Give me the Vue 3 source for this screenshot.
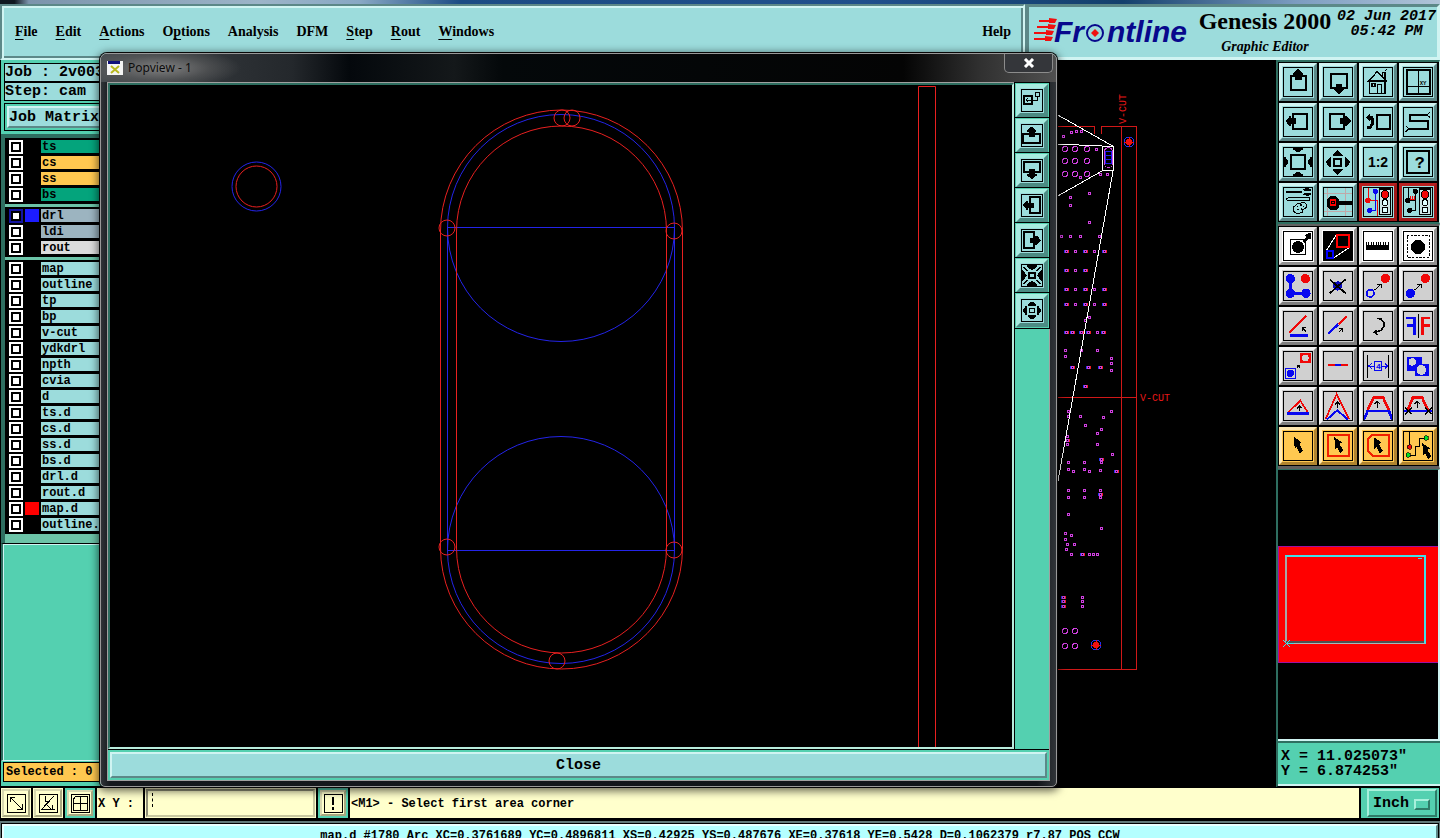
<script setup>
import { ref } from 'vue'

const menus = [
  ['', 'F', 'ile'], ['', 'E', 'dit'], ['', 'A', 'ctions'], ['O', 'p', 'tions'],
  ['Analysis', '', ''], ['DFM', '', ''], ['', 'S', 'tep'], ['', 'R', 'out'], ['', 'W', 'indows']
]

const layerGroups = [
  [
    { name: 'ts', tone: 'mask' }, { name: 'cs', tone: 'signal' },
    { name: 'ss', tone: 'signal' }, { name: 'bs', tone: 'mask' }
  ],
  [
    { name: 'drl', tone: 'drill', swatch: 'blue', active: true },
    { name: 'ldi', tone: 'drill' }, { name: 'rout', tone: 'rout' }
  ],
  ['map', 'outline', 'tp', 'bp', 'v-cut', 'ydkdrl', 'npth', 'cvia', 'd', 'ts.d', 'cs.d', 'ss.d',
    'bs.d', 'drl.d', 'rout.d', 'map.d', 'outline.d'
  ].map(name => ({ name, tone: 'misc', swatch: name === 'map.d' ? 'red' : '' }))
]

const R = '#f00808'
const B = '#0808f0'
const cursor = (x, y) =>
  `<path transform="translate(${x} ${y})" d="M0 0l23 16-7 5 11 20-9 9-10-20-6 6z"/>`
const tiny = (x1, y1, x2, y2, head) =>
  `<path d="M${x1} ${y1}L${x2} ${y2}M${head}" fill="none" stroke="#000" stroke-width="3"/>`
const light = `<path d="M50 6h33v76h-33z" fill="#cfe8e8" stroke="#000" stroke-width="4"/><circle cx="66" cy="23" r="12" fill="${R}" stroke="#000" stroke-width="3"/><circle cx="66" cy="47" r="9" fill="#dff" stroke="#000" stroke-width="3"/><circle cx="66" cy="69" r="9" fill="#dff" stroke="#000" stroke-width="3"/>`

const viewTools = [
  { label: 'Pan up', art: '<path d="M24 27h46v42H24z" fill="none" stroke="#000" stroke-width="6"/><path d="M46 5l15 14v5h-5v16H36V24h-5v-5z"/>' },
  { label: 'Pan down', art: '<path d="M25 20h46v43H25z" fill="none" stroke="#000" stroke-width="6"/><path d="M48 82L34 70v-5h4V52h20v13h4v5z"/>' },
  { label: 'Home view', art: '<path d="M20 42h46v37H20zM14 46L43 13l30 33M58 30V17h8v22M66 12l5-5M27 50h9v9h-9zM43 79V52h13v27" fill="none" stroke="#000" stroke-width="4"/>' },
  { label: 'Zoom to XY', art: '<path d="M11 10h69v71H11z" fill="none" stroke="#000" stroke-width="6"/><path d="M46 10v71M11 57h69" fill="none" stroke="#000" stroke-width="3"/><text x="50" y="53" font-size="17" font-weight="700">XY</text>' },
  { label: 'Pan left', art: '<path d="M29 20h44v46H29z" fill="none" stroke="#000" stroke-width="6"/><path d="M7 42l13-14h5v5h15v19H25v5h-5z"/>' },
  { label: 'Pan right', art: '<path d="M20 20h44v46H20z" fill="none" stroke="#000" stroke-width="6"/><path d="M85 42L72 28h-5v5H52v19h15v5h5z"/>' },
  { label: 'Previous view', art: '<path d="M42 25h38v40H42z" fill="none" stroke="#000" stroke-width="6"/><path d="M8 31l12-11v6h7l5 8v18l-7 13H12v-7h7l4-9V38h-3v6z"/>' },
  { label: 'Serpentine pan', art: '<path d="M75 24H20v18h54v23H16" fill="none" stroke="#000" stroke-width="6"/><path d="M72 24l10-10M72 24l10 8M18 65L8 56M18 65L8 75" fill="none" stroke="#000" stroke-width="3"/>' },
  { label: 'Zoom in', art: '<path d="M24 24h43v43H24z" fill="none" stroke="#000" stroke-width="6"/><path d="M29 2h32v4L45 17 29 6zM29 88h32v-4L45 73 29 84zM2 29v32h4l11-16L6 29zM88 29v32h-4L73 45l11-16z"/>' },
  { label: 'Zoom out', art: '<path d="M33 35h22v22H33z" fill="none" stroke="#000" stroke-width="6"/><path d="M44 9l15 14v4H29v-4zM44 83l15-14v-4H29v4zM8 46l12-15h4v30h-4zM82 46L70 31h-4v30h4z"/>' },
  { label: 'Scale 1 to 2', art: '<text x="45" y="61" font-size="42" font-weight="700" text-anchor="middle" font-family="Liberation Sans, sans-serif">1:2</text>' },
  { label: 'Query', art: '<path d="M12 12h67v65H12z" fill="none" stroke="#000" stroke-width="6"/><text x="50" y="64" font-size="50" font-weight="700" text-anchor="middle">?</text>' },
  { label: 'Setup tools', art: '<path d="M10 12h48v7H10zM58 9l12 4h14V7l-10-5-10 3zM58 21l12-4h14v5l-10 5-10-3z"/><path d="M16 32h64v9H16l-8-5z" fill="none" stroke="#000" stroke-width="3"/><path d="M32 60l12-11 22-2 6 10-5 8-8 2-2 10-16 3-10-8z" fill="none" stroke="#000" stroke-width="3"/><path d="M42 58h4M52 54h4M60 58h4M42 68h5M54 66h4" stroke="#000" stroke-width="4"/>' },
  { label: 'Snap to grid', art: '<path d="M12 0v90M68 0v90M0 18h90M0 74h90" stroke="#c0a8a8" stroke-width="3"/><path d="M22 28h18l9 10v5h37v11H49v5l-9 10H22l-10-10V38z"/><path d="M23 39h15v15H23z" fill="none" stroke="#f00" stroke-width="4"/><path d="M28 44h5v5h-5z" fill="#f00"/>' },
  { label: 'Show nets', tone: 'alert', art: `<path d="M15 0v40h27v48" fill="none" stroke="${R}" stroke-width="3"/><path d="M37 13v57H20" fill="none" stroke="${B}" stroke-width="3"/><circle cx="15" cy="40" r="8" fill="${R}"/><circle cx="37" cy="13" r="8" fill="${B}"/><circle cx="20" cy="70" r="8" fill="${B}"/>${light}` },
  { label: 'Show drc', tone: 'alert', art: `<path d="M15 0v40M37 13v57H20M15 40h22" fill="none" stroke="#000" stroke-width="3"/><circle cx="15" cy="40" r="8"/><circle cx="37" cy="13" r="8"/><circle cx="20" cy="70" r="8"/><path d="M23 28v10h5V28v10h5V28" fill="none" stroke="${R}" stroke-width="3"/>${light}` }
]

const editTools = [
  { label: 'Select feature', tone: 'paper', art: '<path d="M22 26h44v44H22z" fill="none" stroke="#000" stroke-width="3"/><circle cx="45" cy="48" r="18"/><path d="M58 30l12-12-6-6 20-8v21l-6-3-14 14z"/>' },
  { label: 'Popview', tone: 'paper', art: '<path d="M0 0h90v90H0z"/><path d="M10 59l30-48M32 81l48-32" stroke="#fff" stroke-width="3"/><path d="M42 13h36v35H42z" fill="none" stroke="#f00" stroke-width="6"/><path d="M12 61h19v19H12z" fill="none" stroke="#00f" stroke-width="6"/>' },
  { label: 'Measure', tone: 'paper', art: '<path d="M9 32h3v11h4V34h3v9h4V34h3v9h4V34h3v9h5V32h3v11h4V34h3v9h4V34h3v9h4V34h3v9h4V34h3v9h5V32h3v24H9z"/>' },
  { label: 'Select area', tone: 'paper', art: '<path d="M12 12h66v66H12z" fill="none" stroke="#000" stroke-width="3" stroke-dasharray="7 4"/><circle cx="45" cy="48" r="21"/>' },
  { label: 'Connect', art: `<path d="M22 23v44h48" fill="none" stroke="${B}" stroke-width="9"/><circle cx="22" cy="23" r="14" fill="${B}"/><circle cx="67" cy="23" r="14" fill="${R}"/><circle cx="22" cy="67" r="14" fill="${B}"/><circle cx="69" cy="67" r="14" fill="${B}"/>` },
  { label: 'Delete', art: '<circle cx="44" cy="45" r="14" fill="#0808c0"/><path d="M20 25l48 42M68 25L20 67" stroke="#000" stroke-width="5"/>' },
  { label: 'Move', art: `<circle cx="67" cy="22" r="14" fill="${R}"/><circle cx="22" cy="67" r="11" fill="none" stroke="${B}" stroke-width="5"/>${tiny(35, 57, 54, 40, '43 40h11v11')}` },
  { label: 'Copy', art: `<circle cx="67" cy="22" r="14" fill="${R}"/><circle cx="22" cy="67" r="14" fill="${B}"/>${tiny(35, 57, 54, 40, '43 40h11v11')}` },
  { label: 'Rotate', art: `<path d="M18 65l52-50" stroke="${R}" stroke-width="7"/><path d="M20 74h56" stroke="${B}" stroke-width="8"/>${tiny(69, 61, 57, 49, '57 59V49h11')}` },
  { label: 'Stretch', art: `<path d="M46 40l24-24" stroke="${R}" stroke-width="7"/><path d="M16 67l30-27" stroke="${B}" stroke-width="7"/>${tiny(47, 64, 59, 52, '49 52h10v10')}` },
  { label: 'Turn', art: '<path d="M42 22l12 2 9 11v11l-9 12-14 5" fill="none" stroke="#000" stroke-width="5"/><path d="M42 55L30 64l14 9z"/>' },
  { label: 'Mirror', art: `<path d="M8 21h24M12 43h20" stroke="${B}" stroke-width="8"/><path d="M34 17v55" stroke="${B}" stroke-width="8"/><path d="M46 8v74" stroke="#000" stroke-width="3"/><path d="M60 21h22M60 43h20" stroke="${R}" stroke-width="8"/><path d="M58 17v55" stroke="${R}" stroke-width="8"/>` },
  { label: 'Change symbol', art: `<path d="M8 52h29v30H8z" fill="none" stroke="${B}" stroke-width="3"/><circle cx="22" cy="67" r="11" fill="${B}"/><path d="M51 5h33v32H51z" fill="${R}"/><circle cx="67" cy="21" r="10" fill="#d0d0d0"/>${tiny(42, 50, 50, 42, '42 42h8v8')}` },
  { label: 'Break line', art: `<path d="M14 42h62" stroke="${R}" stroke-width="8"/><path d="M36 42h18" stroke="${B}" stroke-width="8"/>` },
  { label: 'Spacing', art: `<path d="M14 11v69M76 11v69" stroke="#000" stroke-width="3"/><path d="M17 45h17M73 45H57M26 37l-9 8 9 8M65 37l9 8-9 8M35 31h21v27H35z" fill="none" stroke="${B}" stroke-width="3"/><text x="46" y="53" font-size="24" font-weight="700" text-anchor="middle" fill="${B}">4</text>` },
  { label: 'Merge shapes', art: `<path d="M13 18h43v21h22v37H37V61H13z" fill="${B}"/><circle cx="28" cy="33" r="11" fill="#d0d0d0"/><circle cx="55" cy="57" r="16" fill="#d0d0d0" stroke="${B}" stroke-width="3"/>` },
  { label: 'Move corner', art: `<path d="M14 66l38-37 24 37" fill="none" stroke="${R}" stroke-width="5"/><path d="M12 67h66" stroke="${B}" stroke-width="8"/>${tiny(49, 60, 49, 46, '42 52l7-7 7 7')}` },
  { label: 'Move triangle', art: `<path d="M8 84L41 9l37 75" fill="none" stroke="${R}" stroke-width="5"/><path d="M12 85l31-27 31 27" fill="none" stroke="${B}" stroke-width="6"/>${tiny(43, 51, 43, 33, '35 41l8-8 8 8')}` },
  { label: 'Move segment', art: `<path d="M14 57l18-38h28l18 38" fill="none" stroke="${R}" stroke-width="8"/><path d="M2 87l12-27h64l10 27" fill="none" stroke="${B}" stroke-width="8"/>${tiny(43, 50, 43, 31, '35 39l8-8 8 8')}` },
  { label: 'Trim segment', art: `<path d="M14 57l16-38h27l18 38" fill="none" stroke="${R}" stroke-width="8"/><path d="M0 60h90" stroke="${B}" stroke-width="8"/><path d="M6 50l20 20M26 50L6 70M66 50l20 20M86 50L66 70" stroke="#000" stroke-width="3"/>${tiny(43, 50, 43, 31, '35 39l8-8 8 8')}` },
  { label: 'Pick', tone: 'pick', art: cursor(33, 18) },
  { label: 'Pick in rectangle', tone: 'pick', art: `<path d="M14 12h63v62H14z" fill="none" stroke="#f02000" stroke-width="6"/>${cursor(34, 18)}` },
  { label: 'Pick in polygon', tone: 'pick', art: `<path d="M14 26l14-14h49v62H28L14 60z" fill="none" stroke="#f02000" stroke-width="6"/>${cursor(32, 18)}` },
  { label: 'Pick net', tone: 'pick', art: `<path d="M19 0v44M16 72h22V46h10V21h22" fill="none" stroke="#000" stroke-width="3"/><circle cx="20" cy="48" r="7" fill="${R}" stroke="#000" stroke-width="2"/><circle cx="70" cy="21" r="7" fill="#0d2" stroke="#000" stroke-width="2"/><circle cx="16" cy="72" r="7" fill="#0d2" stroke="#000" stroke-width="2"/>${cursor(58, 36)}` }
]

const popTools = [
  { label: 'Pop out', art: '<path d="M8 19h25v25H8z" fill="none" stroke="#000" stroke-width="6"/><path d="M42 8h14v14H42zM50 22v10H15M22 25l-7 7 7 7" fill="none" stroke="#000" stroke-width="3"/>' },
  { label: 'View up', art: '<path d="M7 28h50v28H7z" fill="none" stroke="#000" stroke-width="6"/><path d="M32 6l14 12v4h-5v16H23V22h-5v-4z"/>' },
  { label: 'View down', art: '<path d="M8 8h50v28H8z" fill="none" stroke="#000" stroke-width="6"/><path d="M33 60L19 48v-4h5V28h18v16h5v4z"/>' },
  { label: 'View left', art: '<path d="M26 8h31v48H26z" fill="none" stroke="#000" stroke-width="6"/><path d="M5 32l12-13h5v5h17v17H22v5h-5z"/>' },
  { label: 'View right', art: '<path d="M8 8h31v48H8z" fill="none" stroke="#000" stroke-width="6"/><path d="M60 32L48 19h-5v5H26v17h17v5h5z"/>' },
  { label: 'View zoom in', art: '<path d="M25 25h16v16H25z" fill="none" stroke="#000" stroke-width="6"/><path d="M17 2h32v4L33 18 17 6zM17 64h32v-4L33 48 17 60zM2 17v32h4l12-16L6 17zM64 17v32h-4L48 33l12-16z"/><path d="M8 8l12 12M58 8L46 20M8 58l12-12M58 58L46 46" stroke="#000" stroke-width="3"/>' },
  { label: 'View zoom out', art: '<path d="M26 26h14v14H26z" fill="none" stroke="#000" stroke-width="3"/><path d="M33 5l12 10v4H21v-4zM33 61l12-10v-4H21v4zM5 33l9-13h4v26h-4zM61 33l-9-13h-4v26h4z"/>' }
]

// Drilled pads of the board, [y, ...x]
const padRows = [
  [131, 1076, 1081], [132, 1071], [136, 1063], [149, 1096], [174, 1100, 1107], [177, 1080],
  [193, 1089], [197, 1070], [205, 1070], [222, 1089], [236, 1061, 1070, 1080, 1099],
  [251, 1066, 1075, 1085, 1094, 1104], [270, 1066, 1075, 1085],
  [289, 1066, 1075, 1085, 1094, 1104], [304, 1066, 1075, 1085, 1094, 1104], [317, 1089],
  [320, 1085], [332, 1066, 1072, 1081, 1088, 1097, 1103], [350, 1065, 1081, 1097], [356, 1065],
  [358, 1111], [363, 1111], [370, 1111], [367, 1072, 1088, 1100], [386, 1085], [411, 1068, 1111],
  [416, 1068, 1080], [417, 1103], [425, 1085], [429, 1101], [433, 1097], [436, 1067],
  [440, 1067], [444, 1067, 1097], [454, 1112], [459, 1101], [462, 1068, 1084, 1101],
  [469, 1068, 1084], [471, 1073, 1089, 1116], [470, 1100], [490, 1068, 1084, 1100],
  [494, 1100], [497, 1068, 1084, 1100], [514, 1068], [528, 1101], [533, 1065], [535, 1071],
  [539, 1065], [544, 1067, 1074], [549, 1066], [554, 1071, 1082, 1089, 1093, 1097],
  [597, 1063, 1082], [601, 1063, 1082], [606, 1063, 1082]
]
// Pads that also carry an overlapping slot
const slotRows = [
  [251, 1066, 1085, 1104], [270, 1066, 1085], [289, 1066, 1085, 1104], [304, 1066, 1085, 1104],
  [332, 1066, 1072, 1081, 1088, 1103], [367, 1072, 1088, 1100], [386, 1085], [440, 1067],
  [459, 1101], [471, 1116], [494, 1100], [554, 1082], [597, 1063], [601, 1063], [606, 1063]
]
const flat = rows => rows.flatMap(([y, ...xs]) => xs.map(x => ({ x, y })))
const pads = flat(padRows)
const slots = flat(slotRows)
const rings = flat([[149, 1065, 1075, 1087], [161, 1065, 1075, 1087], [174, 1065, 1075, 1087], [631, 1065, 1075], [646, 1065, 1075]])
const targets = [{ x: 1129, y: 142 }, { x: 1096, y: 645 }]
const joints = [[447, 228], [674, 231], [447, 547], [674, 550], [557, 661], [562, 118], [572, 118]]

const xy = ref('')
const unit = ref('Inch')
</script>

<template>
  <div class="app">
    <div class="strip"></div>
    <header class="top">
      <nav class="menubar">
        <button v-for="m in menus" :key="m.join('')" class="menu">{{ m[0] }}<u v-if="m[1]">{{ m[1] }}</u>{{ m[2] }}</button>
        <button class="menu help">Help</button>
      </nav>
      <div class="brand">
        <svg class="logo" viewBox="0 0 160 36" width="160" height="36" role="img" aria-label="Frontline">
          <path fill="#f01010" d="M6 11h10V9l8 1-2 4h-6v-1H6zM4 17h11v-2l8 1-2 4h-6v-1H4zM1 23h12v-2l8 1-2 4h-6v-1H1zM1 29h11v-2l8 1-2 4h-6v-1H1z" />
          <g class="logo-text">
            <text x="21" y="33">Fr</text>
            <text x="74" y="33">ntline</text>
          </g>
          <circle cx="62" cy="24" r="8" fill="none" stroke="#08088c" stroke-width="2" />
          <path d="M62 20l4 4-4 4-4-4z" fill="#f01010" />
        </svg>
        <div class="product"><strong>Genesis 2000</strong><em>Graphic Editor</em></div>
        <time class="clock"><span>02 Jun 2017</span><span>05:42 PM</span></time>
      </div>
    </header>

    <main class="work">
      <aside class="left">
        <div class="field">Job : 2v003</div>
        <div class="field">Step: cam</div>
        <div class="matrix"><button>Job Matrix</button></div>
        <div class="layers">
          <div v-for="(g, i) in layerGroups" :key="i" class="group">
            <label v-for="l in g" :key="l.name" class="layer">
              <input type="checkbox" :class="{ active: l.active }">
              <span class="swatch" :class="l.swatch"></span>
              <span class="name" :class="l.tone">{{ l.name }}</span>
            </label>
          </div>
        </div>
        <div class="filler"></div>
        <div class="selected">Selected : 0</div>
      </aside>

      <section class="stage">
        <svg viewBox="1056 60 220 727" width="220" height="727" shape-rendering="crispEdges" fill="none">
          <path stroke="#d01818" d="M1056 126.500h38.500V134M1101.500 134v-7.500h35V669.500H1056M1121.500 126.500v543M1056 397.500h80.500" />
          <g class="vcut">
            <text x="1140" y="401">V-CUT</text>
            <text transform="translate(1126 124) rotate(-90)">V-CUT</text>
          </g>
          <g stroke="#d040e0">
            <rect v-for="(p, i) in pads" :key="i" :x="p.x - 0.5" :y="p.y - 0.5" width="2" height="2" />
            <circle v-for="(p, i) in rings" :key="i" :cx="p.x" :cy="p.y" r="2.500" />
            <rect x="1104.500" y="147.500" width="8" height="20" rx="4" />
          </g>
          <g v-for="(p, i) in slots" :key="i">
            <path :d="`M${p.x - 1.5} ${p.y - 1}v3`" stroke="#2838f0" />
            <path :d="`M${p.x + 2.5} ${p.y - 1}v3`" stroke="#f02020" />
          </g>
          <path d="M1105.500 151.500h6v12h-6zM1105.500 155.500h6M1105.500 159.500h6" stroke="#2020f0" />
          <g v-for="t in targets" :key="t.y">
            <circle :cx="t.x" :cy="t.y" r="5" stroke="#2030f0" />
            <circle :cx="t.x" :cy="t.y" r="3" fill="#f01010" />
            <path :d="`M${t.x - 5} ${t.y}h10M${t.x} ${t.y - 5}v10`" stroke="#f01010" />
          </g>
          <path d="M1056 114L1113.500 146.500L1056 144M1102.500 146.500h11v24h-11zM1056 197l46-26M1113 171l-55 310" stroke="#fff" />
        </svg>
      </section>

      <aside class="right">
        <div class="tools">
          <button v-for="t in viewTools" :key="t.label" class="tool" :class="t.tone" :aria-label="t.label">
            <svg viewBox="0 0 90 90" v-html="t.art"></svg>
          </button>
        </div>
        <div class="tools edit">
          <button v-for="t in editTools" :key="t.label" class="tool" :class="t.tone || 'silver'" :aria-label="t.label">
            <svg viewBox="0 0 90 90" v-html="t.art"></svg>
          </button>
        </div>
        <div class="overview">
          <svg viewBox="0 0 160 117" preserveAspectRatio="none" fill="none" shape-rendering="crispEdges">
            <path d="M0 0h160v117H0z" fill="#f00" />
            <path d="M0 .5h160M.5 0v117M0 116.500h160" stroke="#a010a0" />
            <path d="M8 97V9" stroke="#a8a8a8" stroke-width="2" />
            <path d="M7 10h140v88" stroke="#40e0e8" stroke-width="2" />
            <path d="M8 96h138" stroke="#505050" stroke-width="2" />
            <path d="M8 97.500h139" stroke="#a8b8b8" />
            <path d="M5 94l7 7M12 94l-7 7M8 97h8M140 12h4" stroke="#40e0e8" />
          </svg>
        </div>
        <div class="coords"><span>X = 11.025073"</span><span>Y = 6.874253"</span></div>
      </aside>
    </main>

    <footer class="prompt">
      <div class="cell"><button aria-label="Line mode"><svg viewBox="0 0 20 20"><path d="M1 1h18v18H1zM4 4l12 12M4 9V4h5M16 11v5h-5" /></svg></button></div>
      <div class="cell"><button aria-label="Angle mode"><svg viewBox="0 0 20 20"><path d="M1 1h18v18H1zM3 17L16 3M7 3v5h4M3 16h14M9 12l4 4M14 12v4" /></svg></button></div>
      <div class="cell teal"><button aria-label="Grid mode"><svg viewBox="0 0 20 20"><path d="M1 1h18v18H1zM6 3h11v14H3V7zM10 3v14M3 10h14" /></svg></button></div>
      <label class="xy" for="xy">X Y :</label>
      <div class="entry"><input id="xy" v-model="xy" type="text"></div>
      <div class="cell teal"><button aria-label="Alert"><svg viewBox="0 0 20 20"><path d="M1 1h18v18H1z" /><path d="M10 4v8M10 14v3" stroke-width="2" /></svg></button></div>
      <p class="message">&lt;M1&gt; - Select first area corner</p>
      <div class="unit">
        <div class="unit-box">
          <select v-model="unit" aria-label="Unit"><option>Inch</option><option>MM</option></select>
        </div>
      </div>
    </footer>
    <div class="status"><div>map.d #1780 Arc XC=0.3761689 YC=0.4896811 XS=0.42925 YS=0.487676 XE=0.37618 YE=0.5428 D=0.1062379 r7.87 POS CCW</div></div>

    <section class="popview" aria-label="Popview - 1">
      <div class="titlebar">
        <svg class="app-icon" viewBox="0 0 16 14" width="16" height="14">
          <path d="M0 0h16v14H0z" fill="#f4f4f4" /><path d="M1 0h12v3H1z" fill="#10107c" />
          <path d="M4 5l8 7M12 5l-8 7" stroke="#b8b820" stroke-width="2" />
        </svg>
        <span class="title">Popview - 1</span>
        <button class="x" aria-label="Close window">
          <svg viewBox="0 0 12 10" width="12" height="10"><path d="M2 1l8 8M10 1l-8 8" stroke="#fff" stroke-width="3" /></svg>
        </button>
      </div>
      <div class="body">
        <div class="view">
          <div class="drawing">
            <svg viewBox="110 85 902 662" fill="none">
              <g stroke="#2424e8">
                <circle cx="256.500" cy="186.500" r="24.500" />
                <circle cx="561" cy="228" r="113.500" />
                <circle cx="561" cy="550" r="113.500" />
                <path d="M447.500 228v322M674.500 228v322M447.500 227.500h227M447.500 550.500h227" />
              </g>
              <g stroke="#e82020">
                <circle cx="256.500" cy="186.500" r="20.500" />
                <path d="M440.500 231a121 121 0 0 1 242 0v317a121 121 0 0 1-242 0z" />
                <path d="M456.500 231a105 105 0 0 1 210 0v317a105 105 0 0 1-210 0z" />
                <circle v-for="(j, i) in joints" :key="i" :cx="j[0]" :cy="j[1]" r="8" />
                <path d="M918.500 747V86.500h17V747" />
              </g>
            </svg>
          </div>
          <div class="poptools">
            <button v-for="t in popTools" :key="t.label" :aria-label="t.label">
              <svg viewBox="0 0 66 66" v-html="t.art"></svg>
            </button>
          </div>
        </div>
        <div class="closebar"><button>Close</button></div>
      </div>
    </section>
  </div>
</template>

<style>
html, body { margin: 0; background: #000; }
</style>

<style scoped>
.app {
  --face: #9cdcdc; --hi: #d0f4f2; --lo: #5c8888; --teal: #54d0b0; --deep: #2e6e60; --cream: #ffffcc;
  position: relative; box-sizing: border-box; height: 100vh; overflow: hidden;
  display: grid; grid-template-rows: 4px 56px minmax(0, 1fr) 33px 18px;
  background: #000; color: #000;
  font: bold 15px/15px "Liberation Mono", monospace;
}
.app * { box-sizing: border-box; }
button, input, select { font: inherit; color: inherit; margin: 0; padding: 0; border: 0; border-radius: 0; background: none; }
svg { display: block; }
.strip { background: linear-gradient(90deg, #101820 0 1%, #7c94ac 2%, #9cb4c8 18%, #88a8c4 25%, #1c4c84 32%, #20508c 60%, #14406c 78%, #7c9cc0 90%, #b0c4d8); }

.top { display: flex; }
.menubar {
  flex: 1; display: flex; align-items: center; gap: 18px; padding: 0 12px 0 13px; background: var(--face);
  border: 2px solid; border-color: var(--lo) var(--hi) var(--hi) var(--lo);
  box-shadow: inset 2px 2px var(--hi), inset -2px -2px var(--lo);
}
.menu { font: bold 14px/18px "Liberation Serif", serif; }
.menu u { text-underline-offset: 3px; }
.help { margin-left: auto; }
.brand {
  flex: 0 0 415px; display: flex; align-items: flex-start; gap: 3px; padding: 2px 1px 0 4px; background: var(--face);
  border: 3px solid; border-color: var(--lo) var(--hi) var(--hi) var(--lo); border-left-width: 4px;
}
.logo { flex: none; overflow: visible; }
.logo-text { font: italic bold 30px "Liberation Sans", sans-serif; fill: #08088c; }
.product { flex: 1; display: flex; flex-direction: column; font-family: "Liberation Serif", serif; text-align: center; white-space: nowrap; }
.product strong { font-size: 24px; line-height: 24px; }
.product em { font-size: 14px; line-height: 27px; }
.clock { font-style: italic; text-align: center; display: flex; flex-direction: column; white-space: nowrap; }

.work { display: flex; min-height: 0; }
.left { flex: 0 0 150px; display: flex; flex-direction: column; padding: 3px 0 1px 3px; background: var(--teal); border-left: 1px solid #000; border-bottom: 1px solid #000; white-space: nowrap; }
.field { height: 19px; padding: 1px 0; border: 1px solid #000; background: var(--face); }
.matrix { margin-top: 2px; padding: 2px; border: 1px solid #000; }
.matrix button { display: block; width: 100%; height: 22px; text-align: left; background: var(--face); border: 2px solid; border-color: var(--hi) var(--lo) var(--lo) var(--hi); }
.layers { margin: 3px 0 0 -3px; border-style: solid; border-color: var(--deep); border-width: 4px 0 0 4px; background: #6cc4a8; padding-bottom: 9px; font-size: 12px; line-height: 15px; }
.group { background: #000; border-left: 2px solid #000; padding: 2px 0 0 2px; }
.group + .group { margin-top: 3px; }
.layer { display: flex; height: 16px; align-items: flex-start; }
.layer input { appearance: none; flex: none; width: 10px; height: 10px; margin: 2px; border: 2px solid #000; background: #fff; outline: 2px solid #fff; }
.layer input.active { outline-color: #1414a0; }
.swatch { flex: none; width: 14px; height: 13px; margin: 0 2px; }
.swatch.blue { background: #1c1cff; }
.swatch.red { background: #f00; }
.name { flex: 1; height: 13px; padding-left: 1px; }
.mask { background: #04a47c; }
.signal { background: #ffc850; }
.drill { background: #9cb4c0; }
.rout { background: #dcdcdc; }
.misc { background: var(--face); }
.filler { flex: 1; margin-left: -3px; border-left: 2px solid var(--deep); border-top: 1px solid #000; border-bottom: 1px solid var(--hi); box-shadow: inset 1px 1px var(--hi); }
.selected { height: 20px; margin: 1px 0 3px -1px; padding: 2px; border: 1px solid #000; background: #ffc850; font-size: 12px; }

.stage { flex: 1; min-width: 0; display: flex; justify-content: flex-end; background: #000; overflow: hidden; }
.stage svg { flex: none; }
.vcut { font: 10px "Liberation Mono", monospace; fill: #e81818; }

.right { flex: 0 0 164px; display: flex; flex-direction: column; background: var(--teal); border-left: 2px solid var(--deep); border-bottom: 1px solid #000; }
.tools { display: grid; grid-template-columns: repeat(4, 38px); gap: 2px; padding: 1px 2px 1px 1px; background: #000; border-top: 2px solid var(--deep); border-bottom: 2px solid var(--deep); border-right: 1px solid var(--hi); }
.edit { border-top: 2px solid #606060; border-bottom: 3px solid #606060; }
.tool { width: 38px; height: 38px; padding: 1px; background: var(--face); border: 3px solid; border-color: var(--hi) var(--lo) var(--lo) var(--hi); }
.tool svg { width: 30px; height: 30px; outline: 1px solid #000; outline-offset: -1px; shape-rendering: crispEdges; }
.silver { background: #d0d0d0; border-color: #f4f4f4 #808080 #808080 #f4f4f4; }
.paper { background: #fff; border-color: #e8e8e8 #909090 #909090 #e8e8e8; }
.pick { background: #ffc850; border-color: #ffe8b0 #b08430 #b08430 #ffe8b0; }
.alert { border-color: #b82020 #a01818 #a01818 #b82020; }
.overview { flex: 1; min-height: 0; display: flex; align-items: center; background: #000; border-top: 1px solid var(--deep); border-right: 2px solid var(--hi); border-bottom: 2px solid var(--hi); }
.overview svg { width: 100%; height: 117px; }
.coords { display: flex; flex-direction: column; padding: 6px 3px 5px; border-top: 2px solid var(--deep); border-bottom: 2px solid var(--hi); }

.prompt { display: flex; gap: 2px; padding: 1px 1px 2px; background: #000; font-size: 12px; }
.cell { flex: 0 0 30px; padding: 1px; background: var(--cream); }
.cell button { display: flex; align-items: center; justify-content: center; width: 100%; height: 100%; background: var(--cream); border: 2px solid; border-color: #d8d8b0 #a8a880 #a8a880 #d8d8b0; }
.cell svg { width: 20px; height: 20px; fill: none; stroke: #000; stroke-width: 1; shape-rendering: crispEdges; }
.teal { background: var(--teal); padding: 2px; }
.xy { flex: 0 0 46px; padding: 9px 1px; background: var(--cream); white-space: pre; }
.entry { position: relative; flex: 0 0 171px; padding: 1px; background: var(--cream); }
.entry::before { content: ""; position: absolute; left: 7px; top: 5px; height: 14px; border-left: 1px dashed #000; }
.entry input { width: 100%; height: 100%; padding: 0 8px; background: var(--cream); border: 2px solid; border-color: #909078 #c8c8a0 #c8c8a0 #909078; outline: 0; }
.message { flex: 1; margin: 0; padding: 9px 1px; background: var(--cream); }
.unit { flex: 0 0 78px; padding: 1px 2px 1px 6px; background: var(--teal); font-size: 15px; }
.unit-box { position: relative; height: 100%; border: 2px solid; border-color: #a8f0dc #2e7c68 #2e7c68 #a8f0dc; }
.unit-box::after { content: ""; position: absolute; right: 5px; top: 8px; width: 12px; height: 7px; border: 2px solid; border-color: #a8f0dc #2e7c68 #2e7c68 #a8f0dc; pointer-events: none; }
.unit select { appearance: none; width: 100%; height: 100%; padding-left: 4px; }
.status { padding: 3px 2px 0; background: #607878; border-top: 1px solid #000; font-size: 12px; text-align: center; white-space: nowrap; overflow: hidden; }
.status div { height: 24px; padding-top: 3px; background: #b4ffff; border: 2px solid #e8ffff; border-right-color: var(--lo); outline: 1px solid #000; }

.popview {
  position: absolute; left: 100px; top: 53px; right: 383px; bottom: 51px;
  display: flex; flex-direction: column; padding: 0 6px 5px;
  background: linear-gradient(90deg, #303438, #14181c 1%, #101418 98%, #303438);
  border: 1px solid #989898; border-radius: 7px 7px 5px 5px;
  box-shadow: 0 0 0 1px #080808, 0 2px 8px 2px rgba(0, 0, 0, .6);
}
.titlebar { flex: 0 0 28px; display: flex; align-items: center; gap: 5px; margin: 0 -6px; padding-left: 6px; border-radius: 6px 6px 0 0;
  background: radial-gradient(ellipse 80px 20px at 60px 14px, #808080, rgba(100, 100, 100, .5) 60%, transparent), linear-gradient(90deg, #484c50, #2c3034 14%, #24282c 20%, #04080c 26%, #14181a 37%, #04080a 42%, #040404 84%, #303030 92%, #505050); }
.title { font: 12px/16px "Noto Sans", sans-serif; color: #0c0c0c; }
.x { align-self: flex-start; display: flex; justify-content: center; width: 49px; height: 19px; margin: 0 3px 0 auto; padding-top: 4px; border: 1px solid #8c8c8c; border-top: 0; border-radius: 0 0 5px 5px; background: #34363a; }
.body { flex: 1; min-height: 0; display: flex; flex-direction: column; border: 1px solid #a0a0a0; background: #000; }
.view { flex: 1; min-height: 0; display: flex; }
.drawing { flex: 1; min-width: 0; border: 2px solid; border-color: var(--deep) #b8ecdc #b8ecdc var(--deep); background: #000; }
.drawing svg { width: 100%; height: 100%; }
.poptools { flex: 0 0 34px; display: flex; flex-direction: column; gap: 2px; margin-left: 1px; padding: 1px 0 0 1px; background: var(--teal); }
.poptools button { width: 32px; height: 33px; padding: 1px; background: var(--face); border: 4px solid; border-color: #a8ece0 #4c8c84 #4c8c84 #a8ece0; outline: 1px solid var(--teal); box-shadow: 0 0 0 2px #000; }
.poptools svg { width: 22px; height: 23px; outline: 1px solid #000; outline-offset: -1px; shape-rendering: crispEdges; }
.closebar { flex: 0 0 30px; margin-top: 1px; padding: 2px; background: var(--teal); }
.closebar button { width: 100%; height: 100%; background: var(--face); border: 2px solid; border-color: var(--hi) var(--lo) var(--lo) var(--hi); }
</style>
